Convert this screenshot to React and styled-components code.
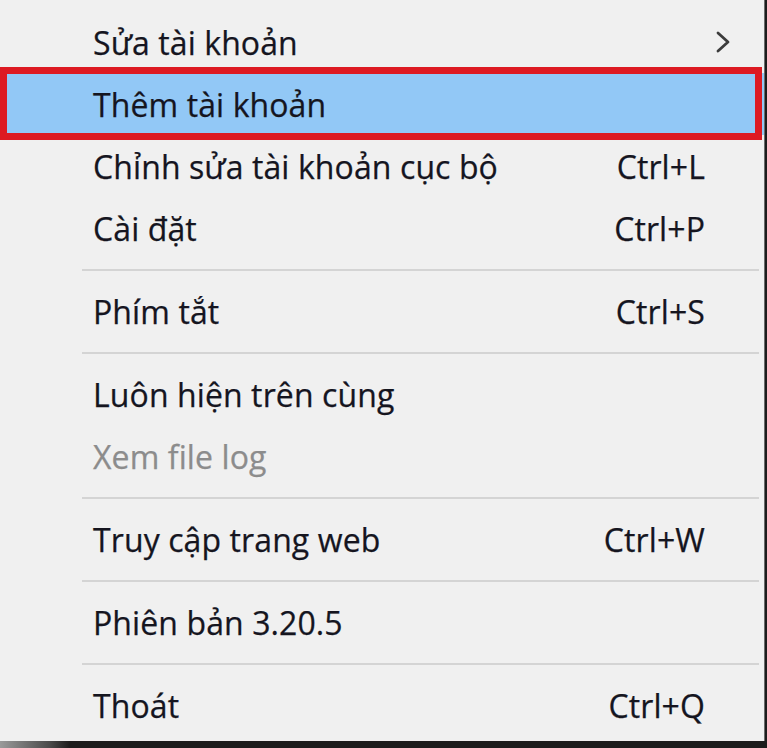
import React from "react";
import styled, { createGlobalStyle } from "styled-components";

const Global = createGlobalStyle`
  html, body { margin: 0; padding: 0; }
  body {
    width: 767px;
    height: 748px;
    overflow: hidden;
    background: #1c1c1c;
    font-family: "Open Sans", "Noto Sans", sans-serif;
  }
`;

const Page = styled.div`
  width: 767px;
  height: 748px;
  display: flex;
  flex-direction: column;
  background: linear-gradient(90deg, #9a9a9a 0px, #4a4a4a 50px, #1c1c1c 70px);
`;

const Menu = styled.div`
  width: 765px;
  height: 741px;
  box-sizing: border-box;
  background: #f0f0f0;
  border-right: 1px solid #6b6b6b;
  padding: 11px 0 6px;
  display: flex;
  flex-direction: column;
`;

const Row = styled.div`
  position: relative;
  height: 62px;
  flex: none;
  display: flex;
  align-items: center;
  padding: 0 36px 0 93px;
  font-size: 32px;
  letter-spacing: 0.1px;
  -webkit-text-stroke: 0.25px currentColor;
  color: ${(p) => (p.$disabled ? "#8c8c8c" : "#15151f")};
  background: ${(p) => (p.$active ? "#92c8f6" : "transparent")};

  ${(p) =>
    p.$active &&
    `
    &::after {
      content: "";
      position: absolute;
      left: 0;
      right: 2px;
      top: -6px;
      bottom: -5px;
      border: 7px solid #dd1a22;
      pointer-events: none;
    }
  `}
`;

const Label = styled.span`
  flex: 1;
  white-space: nowrap;
`;

const Shortcut = styled.span`
  width: 120px;
  text-align: right;
  margin-right: 23px;
  white-space: nowrap;
`;

const Arrow = styled.span`
  width: 120px;
  margin-right: -4px;
  display: flex;
  justify-content: flex-end;
`;

const Separator = styled.div`
  height: 21px;
  flex: none;
  display: flex;
  align-items: center;
  padding: 0 5px 0 82px;

  &::before {
    content: "";
    flex: 1;
    height: 2px;
    background: #d4d4d4;
  }
`;

const Chevron = () => (
  <svg width="18" height="24" viewBox="0 0 18 24">
    <polyline
      points="4,3 14,12 4,21"
      fill="none"
      stroke="#3c3c3c"
      strokeWidth="2.8"
      strokeLinecap="round"
      strokeLinejoin="round"
    />
  </svg>
);

const items = [
  { label: "Sửa tài khoản", sub: true },
  { label: "Thêm tài khoản", active: true },
  { label: "Chỉnh sửa tài khoản cục bộ", key: "Ctrl+L" },
  { label: "Cài đặt", key: "Ctrl+P" },
  { sep: true },
  { label: "Phím tắt", key: "Ctrl+S" },
  { sep: true },
  { label: "Luôn hiện trên cùng" },
  { label: "Xem file log", disabled: true },
  { sep: true },
  { label: "Truy cập trang web", key: "Ctrl+W" },
  { sep: true },
  { label: "Phiên bản 3.20.5" },
  { sep: true },
  { label: "Thoát", key: "Ctrl+Q" },
];

export default function App() {
  return (
    <>
      <Global />
      <Page>
        <Menu>
          {items.map((it, i) =>
            it.sep ? (
              <Separator key={i} />
            ) : (
              <Row key={i} $active={it.active} $disabled={it.disabled}>
                <Label>{it.label}</Label>
                {it.sub ? (
                  <Arrow>
                    <Chevron />
                  </Arrow>
                ) : (
                  <Shortcut>{it.key || ""}</Shortcut>
                )}
              </Row>
            )
          )}
        </Menu>
      </Page>
    </>
  );
}
